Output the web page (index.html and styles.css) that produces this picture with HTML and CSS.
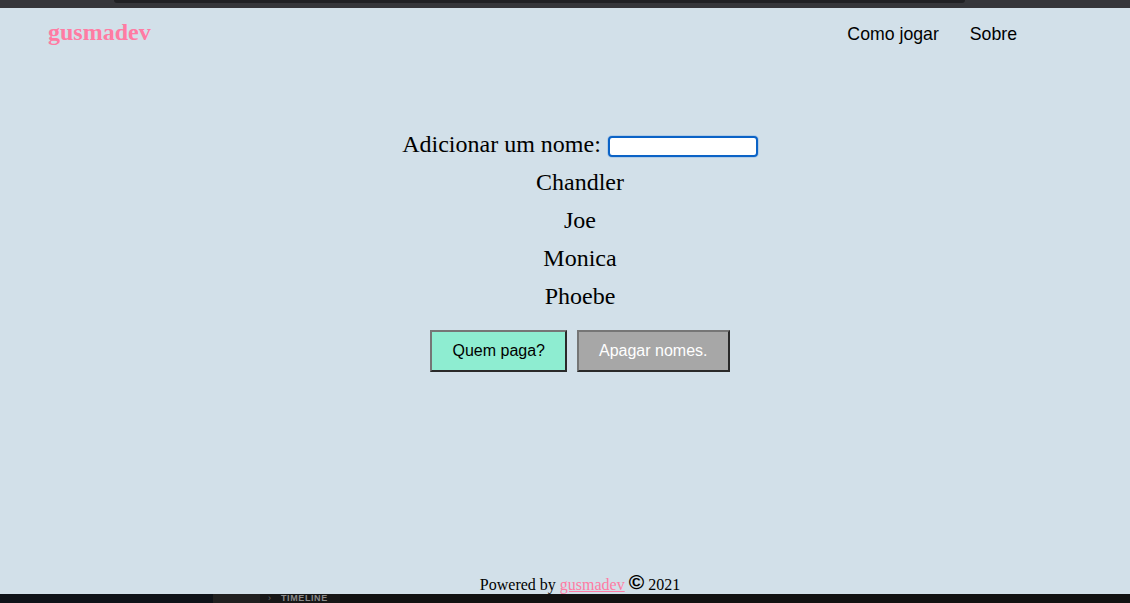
FILE: index.html
```html
<!DOCTYPE html>
<html lang="pt">
<head>
<meta charset="utf-8">
<title>Quem paga?</title>
<link rel="stylesheet" href="styles.css">
</head>
<body>
<div class="window">
  <div class="chrome-top"><div class="chrome-tab"></div></div>
  <div class="page">
    <header class="header">
      <a class="logo" href="#">gusmadev</a>
      <nav class="nav">
        <a class="nav-link" href="#">Como jogar</a>
        <a class="nav-link" href="#">Sobre</a>
      </nav>
    </header>
    <main class="main">
      <div class="add-row">
        <label class="add-label">Adicionar um nome: <input class="name-input" type="text"></label>
      </div>
      <ul class="names">
        <li class="name">Chandler</li>
        <li class="name">Joe</li>
        <li class="name">Monica</li>
        <li class="name">Phoebe</li>
      </ul>
      <div class="buttons">
        <button class="btn btn-pay">Quem paga?</button>
        <button class="btn btn-clear">Apagar nomes.</button>
      </div>
    </main>
    <footer class="footer">Powered by <a class="footer-link" href="#">gusmadev</a> <span class="copy">©</span> 2021</footer>
  </div>
  <div class="devtools">
    <div class="dt-left"></div>
    <div class="dt-box"></div>
    <div class="dt-tab"><span class="dt-chev">›</span><span class="dt-label">TIMELINE</span></div>
    <div class="dt-rest"></div>
  </div>
</div>
</body>
</html>
```

FILE: styles.css
```css
* { box-sizing: border-box; }
html, body { margin: 0; padding: 0; }
body { width: 1130px; height: 603px; overflow: hidden; }

.window {
  display: flex;
  flex-direction: column;
  height: 603px;
}

.chrome-top {
  height: 8px;
  flex: 0 0 8px;
  background: #35363a;
  padding-left: 114px;
  padding-right: 165px;
}
.chrome-tab {
  height: 3px;
  background: #202124;
  border-radius: 0 0 6px 6px;
}

.page {
  flex: 1;
  display: flex;
  flex-direction: column;
  background: #d2e0e9;
}

.header {
  height: 50px;
  padding-top: 11px;
  display: flex;
  align-items: baseline;
}
.logo {
  margin-left: 48px;
  font-family: "Liberation Serif", "Times New Roman", serif;
  font-weight: bold;
  font-size: 24px;
  color: #ff7ba3;
  text-decoration: none;
}
.nav {
  margin-left: auto;
  padding-right: 113px;
  display: flex;
  gap: 31px;
}
.nav-link {
  font-family: "Liberation Sans", Arial, sans-serif;
  font-size: 17.7px;
  color: #000;
  text-decoration: none;
}

.main {
  flex: 1;
  padding-top: 67px;
  padding-left: 30px;
  text-align: center;
  font-family: "Liberation Serif", "Times New Roman", serif;
  font-size: 24px;
  color: #000;
}
.add-row { line-height: 38px; }
.name-input {
  width: 150px;
  height: 21px;
  margin: 0 0 0 1px;
  padding: 1px 3px;
  border: 2px solid #0b63c6;
  border-radius: 4px;
  background: #fff;
  box-shadow: 0 0 0 1px rgba(120, 170, 230, 0.35);
  vertical-align: middle;
  font-size: 13px;
  outline: none;
}
.names {
  list-style: none;
  margin: 0;
  padding: 0;
}
.name { line-height: 38px; }

.buttons {
  margin-top: 15px;
  display: flex;
  justify-content: center;
  gap: 10px;
}
.btn {
  padding: 10px 20px;
  font-family: "Liberation Sans", Arial, sans-serif;
  font-size: 16px;
  line-height: 18px;
  border: 2px solid;
  border-color: #767676 #2a2a2a #2a2a2a #767676;
  cursor: pointer;
}
.btn-pay { background: #8eedd1; color: #000; }
.btn-clear { background: #a7a7a7; color: #fff; }

.footer {
  margin-bottom: 0;
  padding-left: 30px;
  text-align: center;
  font-family: "Liberation Serif", "Times New Roman", serif;
  font-size: 16px;
  line-height: 18px;
  color: #000;
}
.footer-link { color: #ff7ba3; }
.copy {
  font-family: "Liberation Sans", Arial, sans-serif;
  font-weight: bold;
  font-size: 21px;
  line-height: 1;
  vertical-align: 1px;
}

.devtools {
  height: 9px;
  flex: 0 0 9px;
  display: flex;
  overflow: hidden;
  background: #111111;
}
.dt-left { width: 213px; background: #0e1218; }
.dt-box { width: 47px; background: #202020; }
.dt-tab {
  width: 80px;
  background: #171717;
  display: flex;
  align-items: center;
  padding-left: 8px;
  font-family: "Liberation Sans", Arial, sans-serif;
  font-weight: bold;
  font-size: 9px;
  line-height: 9px;
  color: #8a8a8a;
}
.dt-chev { width: 13px; font-weight: normal; color: #666; }
.dt-label { letter-spacing: 0.6px; }
.dt-rest { flex: 1; background: #111111; }
```
